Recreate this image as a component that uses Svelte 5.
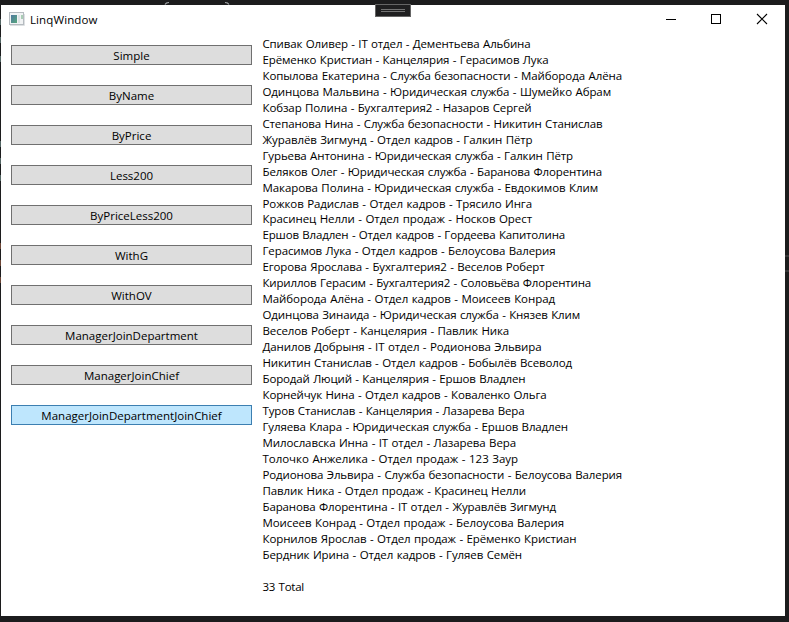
<script>
  const buttons = [
    'Simple', 'ByName', 'ByPrice', 'Less200', 'ByPriceLess200', 'WithG', 'WithOV',
    'ManagerJoinDepartment', 'ManagerJoinChief', 'ManagerJoinDepartmentJoinChief'
  ];
  const selected = 9;
  const rows = [
    'Спивак Оливер - IT отдел - Дементьева Альбина',
    'Ерёменко Кристиан - Канцелярия - Герасимов Лука',
    'Копылова Екатерина - Служба безопасности - Майборода Алёна',
    'Одинцова Мальвина - Юридическая служба - Шумейко Абрам',
    'Кобзар Полина - Бухгалтерия2 - Назаров Сергей',
    'Степанова Нина - Служба безопасности - Никитин Станислав',
    'Журавлёв Зигмунд - Отдел кадров - Галкин Пётр',
    'Гурьева Антонина - Юридическая служба - Галкин Пётр',
    'Беляков Олег - Юридическая служба - Баранова Флорентина',
    'Макарова Полина - Юридическая служба - Евдокимов Клим',
    'Рожков Радислав - Отдел кадров - Трясило Инга',
    'Красинец Нелли - Отдел продаж - Носков Орест',
    'Ершов Владлен - Отдел кадров - Гордеева Капитолина',
    'Герасимов Лука - Отдел кадров - Белоусова Валерия',
    'Егорова Ярослава - Бухгалтерия2 - Веселов Роберт',
    'Кириллов Герасим - Бухгалтерия2 - Соловьёва Флорентина',
    'Майборода Алёна - Отдел кадров - Моисеев Конрад',
    'Одинцова Зинаида - Юридическая служба - Князев Клим',
    'Веселов Роберт - Канцелярия - Павлик Ника',
    'Данилов Добрыня - IT отдел - Родионова Эльвира',
    'Никитин Станислав - Отдел кадров - Бобылёв Всеволод',
    'Бородай Люций - Канцелярия - Ершов Владлен',
    'Корнейчук Нина - Отдел кадров - Коваленко Ольга',
    'Туров Станислав - Канцелярия - Лазарева Вера',
    'Гуляева Клара - Юридическая служба - Ершов Владлен',
    'Милославска Инна - IT отдел - Лазарева Вера',
    'Толочко Анжелика - Отдел продаж - 123 Заур',
    'Родионова Эльвира - Служба безопасности - Белоусова Валерия',
    'Павлик Ника - Отдел продаж - Красинец Нелли',
    'Баранова Флорентина - IT отдел - Журавлёв Зигмунд',
    'Моисеев Конрад - Отдел продаж - Белоусова Валерия',
    'Корнилов Ярослав - Отдел продаж - Ерёменко Кристиан',
    'Бердник Ирина - Отдел кадров - Гуляев Семён'
  ];
  // right edge of each line, in pixels from the left of the list
  const widths = [
    268, 286, 359.5, 348.5, 269, 340, 270, 310.5, 339.5, 335.5, 269.5, 269.5, 302.5, 293, 282, 328.5,
    292.5, 317.5, 246.5, 279, 309.5, 263, 284, 262, 305.5, 253.5, 255.5, 359.5, 263.5, 293.5, 301.5, 314, 259.5
  ];

  function fit(node, width) {
    const natural = node.getBoundingClientRect().width;
    node.style.letterSpacing = `${(width - natural) / node.textContent.length}px`;
  }
</script>

<div class="desktop">
  <svg class="behind" width="789" height="622" viewBox="0 0 789 622" aria-hidden="true">
    <path d="M165 4.5q1-2 4-2M225 2.5q3 0 4 2" fill="none" stroke="#a5a9ac" stroke-width="1.2" />
    <path d="M0 22h1M0 40h1M0 59h1M0 144h1M0 161h1M0 178h1" stroke="#526563" stroke-width="6" />
    <path d="M0 246h1M0 263h1M0 280h1" stroke="#6b4535" stroke-width="6" />
    <path d="M785 256h4M785 271h4" stroke="#363637" stroke-width="2" />
  </svg>

  <main class="window">
    <header>
      <svg class="app" width="16" height="14" viewBox="0 0 16 14" aria-hidden="true">
        <defs>
          <linearGradient id="pane" x1="0" y1="0" x2="1" y2="1">
            <stop offset="0" stop-color="#4d789f" /><stop offset="1" stop-color="#58a77d" />
          </linearGradient>
        </defs>
        <rect x=".5" y=".5" width="14" height="12" fill="#f1f3f4" stroke="#b5bbc0" />
        <path d="M1 13.5h14.5V2" fill="none" stroke="#dde0e2" />
        <rect x="2" y="3" width="6" height="8" fill="url(#pane)" />
        <rect x="9" y="3" width="2" height="8" fill="#dde3e5" />
        <rect x="12" y="3" width="2" height="4" fill="#a9cdb5" />
      </svg>
      <span class="title" use:fit={67.5}>LinqWindow</span>
      <svg class="controls" width="104" height="12" viewBox="0 0 104 12" aria-hidden="true">
        <path d="M0 6.5h10" stroke="#000" />
        <rect x="45.5" y="1.5" width="9" height="9" fill="none" stroke="#000" />
        <path d="M91 1l10 10M101 1l-10 10" stroke="#000" stroke-width="1.1" />
      </svg>
    </header>
    <div class="body">
      <nav>
        {#each buttons as label, i}
          <button class:selected={i === selected}><span>{label}</span></button>
        {/each}
      </nav>
      <section>
        {#each rows as row, i}
          <div class="row"><span use:fit={widths[i]}>{row}</span></div>
        {/each}
        <div class="row total"><span use:fit={41.5}>33 Total</span></div>
      </section>
    </div>
  </main>

  <div class="grip"><i></i><i></i></div>
</div>

<style>
  :global(body) { overflow: hidden; }
  .desktop {
    position: relative;
    box-sizing: border-box;
    width: 789px;
    height: 622px;
    padding: 5px 4px 6px 1px;
    background: #1c1c1d;
    font-family: "Open Sans", "Noto Sans", sans-serif;
    font-size: 11.5px;
    color: #000;
  }
  .behind { position: absolute; left: 0; top: 0; }
  .window { position: relative; height: 611px; background: #fff; }
  header {
    display: flex;
    align-items: center;
    box-sizing: border-box;
    height: 29px;
    padding: 0 15px 1px 8px;
  }
  .app { flex: none; margin-right: 5px; }
  .title { white-space: nowrap; }
  .controls { margin-left: auto; }
  .body { display: flex; }
  nav { display: flex; flex-direction: column; gap: 20px; width: 241px; padding: 11px 0 0 10px; }
  button {
    display: flex;
    align-items: center;
    justify-content: center;
    box-sizing: border-box;
    height: 20px;
    padding: 2px 0 0;
    border: 1px solid #707070;
    background: #ddd;
    font: inherit;
    line-height: 16px;
    color: #000;
  }
  .selected { border-color: #3c7fb1; background: #bee6fd; }
  section { padding: 2px 0 0 10.5px; }
  .row { height: 15.96px; line-height: 15.96px; white-space: nowrap; word-spacing: 0.6px; }
  .total { margin-top: 16.5px; }
  .grip {
    position: absolute;
    left: 375px;
    top: 4px;
    box-sizing: border-box;
    display: flex;
    flex-direction: column;
    gap: 1px;
    width: 36px;
    height: 13px;
    padding: 4px 5px;
    border: 1px solid #656565;
    background: #1f1f20;
  }
  .grip i { height: 1px; background: #737373; }
</style>
